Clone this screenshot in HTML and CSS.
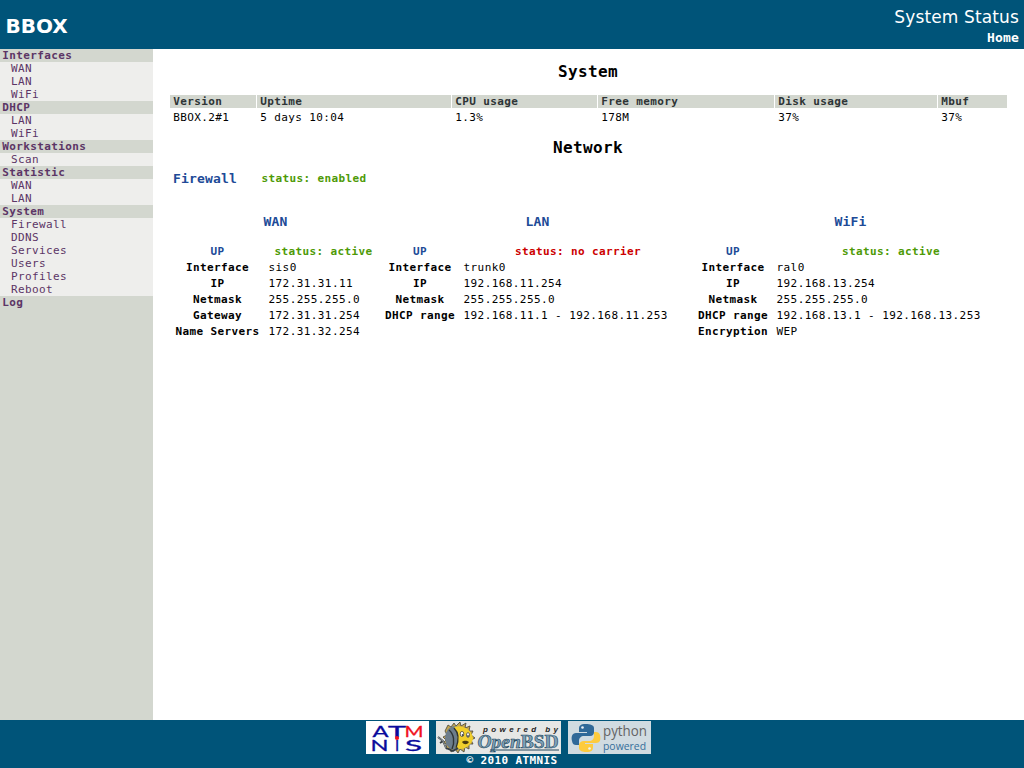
FILE: index.html
```html
<!DOCTYPE html>
<html lang="en">
<head>
<meta charset="utf-8">
<title>BBOX - System Status</title>
<link rel="stylesheet" href="styles.css">
</head>
<body>
<header class="header">
  <div class="brand">BBOX</div>
  <div class="heading"><div class="page-title">System Status</div><a class="home">Home</a></div>
</header>
<div class="middle">
  <nav class="sidebar">
    <div class="group">Interfaces</div><a>WAN</a><a>LAN</a><a>WiFi</a>
    <div class="group">DHCP</div><a>LAN</a><a>WiFi</a>
    <div class="group">Workstations</div><a>Scan</a>
    <div class="group">Statistic</div><a>WAN</a><a>LAN</a>
    <div class="group">System</div><a>Firewall</a><a>DDNS</a><a>Services</a><a>Users</a><a>Profiles</a><a>Reboot</a>
    <div class="group">Log</div>
  </nav>
  <main class="content">
    <h1 class="title">System</h1>
    <div class="stats">
      <b>Version</b><b>Uptime</b><b>CPU usage</b><b>Free memory</b><b>Disk usage</b><b>Mbuf</b>
      <span>BBOX.2#1</span><span>5 days 10:04</span><span>1.3%</span><span>178M</span><span>37%</span><span>37%</span>
    </div>
    <h1 class="title network-title">Network</h1>
    <div class="firewall"><h2>Firewall</h2><span class="ok">status: enabled</span></div>
    <div class="panels">
      <section class="wan">
        <h2>WAN</h2>
        <div class="details">
          <b class="up">UP</b><span class="state ok">status: active</span>
          <b>Interface</b><span>sis0</span>
          <b>IP</b><span>172.31.31.11</span>
          <b>Netmask</b><span>255.255.255.0</span>
          <b>Gateway</b><span>172.31.31.254</span>
          <b>Name Servers</b><span>172.31.32.254</span>
        </div>
      </section>
      <section class="lan">
        <h2>LAN</h2>
        <div class="details">
          <b class="up">UP</b><span class="state bad">status: no carrier</span>
          <b>Interface</b><span>trunk0</span>
          <b>IP</b><span>192.168.11.254</span>
          <b>Netmask</b><span>255.255.255.0</span>
          <b>DHCP range</b><span>192.168.11.1 - 192.168.11.253</span>
        </div>
      </section>
      <section class="wifi">
        <h2>WiFi</h2>
        <div class="details">
          <b class="up">UP</b><span class="state ok">status: active</span>
          <b>Interface</b><span>ral0</span>
          <b>IP</b><span>192.168.13.254</span>
          <b>Netmask</b><span>255.255.255.0</span>
          <b>DHCP range</b><span>192.168.13.1 - 192.168.13.253</span>
          <b>Encryption</b><span>WEP</span>
        </div>
      </section>
    </div>
  </main>
</div>
<footer class="footer">
  <div class="badges">
    <svg class="badge" width="63" height="33" viewBox="0 0 63 33">
      <rect width="63" height="33" fill="#fff"/>
      <g class="atmnis" fill="#0a0a9c" stroke="#0a0a9c">
        <text x="6.5" y="15.5" textLength="16" lengthAdjust="spacingAndGlyphs">A</text>
        <text x="22" y="15.5" textLength="18" lengthAdjust="spacingAndGlyphs">T</text>
        <text x="38.5" y="15.5" textLength="19" lengthAdjust="spacingAndGlyphs" fill="#f0101c" stroke="#f0101c">M</text>
        <text x="4.5" y="29.5" textLength="18" lengthAdjust="spacingAndGlyphs">N</text>
        <text x="29" y="29.5">I</text>
        <text x="39" y="29.5" textLength="17" lengthAdjust="spacingAndGlyphs">S</text>
      </g>
      <circle cx="31" cy="17" r="2.1" fill="#f0101c"/>
    </svg>
    <svg class="badge" width="125" height="33" viewBox="0 0 125 33">
      <rect width="125" height="33" fill="#e6e7e5"/>
      <path d="M10 8l2-4 3 2 3-4 2 3 4-4 1 4 5-3-1 5 5-2-1 5 4 0-2 4 4 3-4 2 2 4-4 0 0 5-4-2-1 5-4-3-2 4-3-4-4 3-1-4-4 1 1-5-4-1 3-3-3-3 4-2-2-4z" fill="#c3a650" stroke="#45433a" stroke-width=".8"/>
      <ellipse cx="19" cy="17" rx="10" ry="12" fill="#6c7d8c"/>
      <path d="M18 6c8-3 19 3 19 12-2 7-10 12-18 9 4-6 3-14-1-21z" fill="#f1cf2c"/>
      <path d="M13 9c5 4 6 12 3 19M18 7c5 5 5 12 2 20" fill="none" stroke="#2d3335" stroke-width="1.4"/>
      <ellipse cx="26" cy="13" rx="1.8" ry="2.6" fill="#fff" stroke="#333" stroke-width=".7"/>
      <ellipse cx="32" cy="14" rx="1.5" ry="2.4" fill="#fff" stroke="#333" stroke-width=".7"/>
      <circle cx="26.5" cy="14" r=".8"/><circle cx="32" cy="15" r=".8"/>
      <path d="M26 21c3-2 5-1 7 0-2 3-5 3-7 0z" fill="#4b3b0e"/>
      <path d="M2 16l5 4 3 7M7 20l-3 2M10 27l7 3 5-3" fill="none" stroke="#353c42" stroke-width="1.8"/>
      <path d="M2 16l5 4 3 7" fill="none" stroke="#a7b0b3" stroke-width=".8"/>
      <text class="powered" x="47" y="11" textLength="75">powered by</text>
      <text class="openbsd" x="41.5" y="26.5" textLength="81" lengthAdjust="spacingAndGlyphs"><tspan font-style="italic">Open</tspan>BSD</text>
      <path d="M54 29H123" stroke="#22465c"/>
    </svg>
    <svg class="badge" width="83" height="33" viewBox="0 0 83 33">
      <rect width="83" height="33" fill="#d0dbe1"/>
      <path d="M18 3c-6 0-7 2-7 5v3h8v1H8c-4 0-5 4-4 8 .5 3 2 4 4 4h3v-4c0-3 2-5 5-5h6c3 0 4-2 4-4V7c0-3-4-4-8-4z" fill="#306998"/>
      <circle cx="14.5" cy="6.5" r="1.3" fill="#edf2f5"/>
      <path d="M18 31c6 0 7-2 7-5v-3h-8v-1h11c4 0 5-3 4-8-.6-2-2-3-4-3h-2v4c0 3-2 5-5 5h-5c-3 0-5 2-5 4v3c0 3 4 4 7 4z" fill="#fdcb3d"/>
      <circle cx="21.5" cy="27.5" r="1.3" fill="#edf2f5"/>
      <text class="python" x="35" y="14.5" textLength="44" lengthAdjust="spacingAndGlyphs">python</text>
      <text class="python-powered" x="35" y="28.5" textLength="43" lengthAdjust="spacingAndGlyphs">powered</text>
    </svg>
  </div>
  <div class="copyright">© 2010 ATMNIS</div>
</footer>
</body>
</html>
```

FILE: styles.css
```css
* { box-sizing: border-box; }
body {
  margin: 0;
  height: 768px;
  overflow: hidden;
  display: flex;
  flex-direction: column;
  background: #fff;
  color: #000;
  font: 11px/13px "DejaVu Sans Mono", monospace;
  letter-spacing: .378px;
}
h1, h2 { margin: 0; }
.header {
  height: 49px;
  flex: none;
  display: flex;
  justify-content: space-between;
  padding: 0 5px;
  background: #005479;
  color: #fff;
}
.brand { padding: 14px 0 0 .5px; font: bold 20px/24px "DejaVu Sans", sans-serif; letter-spacing: 0; }
.heading { text-align: right; padding-top: 7px; }
.page-title { font: 17px/21px "DejaVu Sans", sans-serif; letter-spacing: .13px; }
.home { display: block; padding-top: 2px; font-size: 13px; font-weight: bold; line-height: 16px; letter-spacing: .17px; }
.middle { flex: 1; min-height: 0; display: flex; }
.sidebar { width: 153px; flex: none; background: #d3d7cf; color: #5c3566; }
.sidebar a { display: block; padding-left: 11px; background: #eeeeec; }
.group { padding-left: 2.3px; font-weight: bold; }
.content { flex: 1; padding: 13px 17px 0; }
.title { width: 836px; text-align: center; font-size: 16px; line-height: 20px; letter-spacing: .37px; }
.stats { margin-top: 13px; display: grid; grid-template-columns: 86px 194px 145px 176px 162px 69px; column-gap: 1px; row-gap: 3px; }
.stats b { padding-left: 3.3px; background: #d3d7cf; color: #2e3436; }
.stats span { padding-left: 3.3px; }
.network-title { margin-top: 14px; }
h2 { color: #204a97; font-size: 13px; line-height: 16px; letter-spacing: .17px; }
.firewall { display: flex; align-items: flex-start; gap: 24.5px; margin-top: 13px; padding-left: 3px; }
.firewall span { padding-top: 1px; }
.ok, .bad { font-weight: bold; }
.ok { color: #4e9a06; }
.bad { color: #cc0000; }
.panels { display: flex; padding-left: 2px; margin-top: 27px; }
.panels h2 { text-align: center; margin-bottom: 14px; }
.wan { width: 210px; }
.wan h2 { width: 207px; }
.lan { width: 313px; }
.wifi { width: 314px; }
.lan h2, .wifi h2 { width: 311px; }
.details { display: grid; grid-template-columns: 76px 236px; column-gap: 2px; line-height: 16px; }
.wan .details { grid-template-columns: 91px 117px; }
.details b { text-align: center; }
.details span { padding-left: 3.5px; white-space: nowrap; letter-spacing: .42px; }
.details .state { padding: 0; text-align: center; letter-spacing: .378px; }
.up { color: #204a97; }
.footer { height: 48px; flex: none; padding-top: 1px; background: #005479; color: #fff; }
.badges { display: flex; justify-content: center; gap: 7px; padding-right: 7px; height: 33px; }
.badge { display: block; letter-spacing: 0; }
.copyright { text-align: center; font-weight: bold; line-height: 13px; }
.atmnis { font: 15px Lato, sans-serif; stroke-width: .3px; }
.powered { font: italic bold 8px "Liberation Sans", sans-serif; fill: #222; }
.openbsd { font: bold 18px "Liberation Serif", serif; fill: #7fa3ba; stroke: #22465c; stroke-width: .6px; }
.python { font: 14px "Open Sans", sans-serif; fill: #646464; }
.python-powered { font: 11px "Open Sans", sans-serif; fill: #366f9b; }
```
